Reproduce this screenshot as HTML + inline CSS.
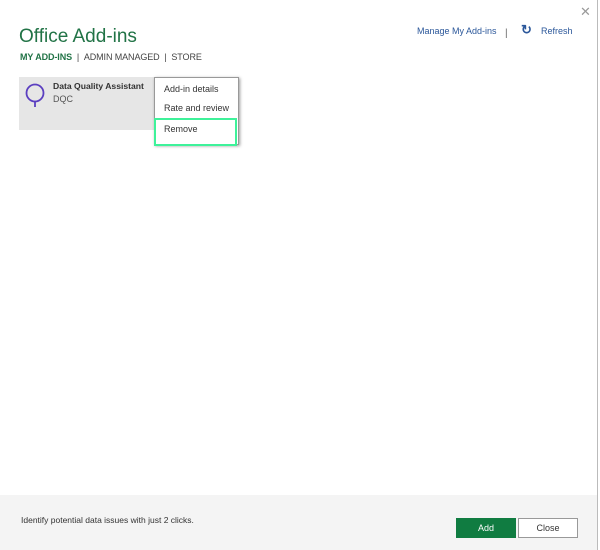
<!DOCTYPE html>
<html><head><style>
body{margin:0;width:600px;height:550px;background:#fff;font-family:"Liberation Sans",sans-serif;position:relative;overflow:hidden}
.a{position:absolute;white-space:nowrap}
</style></head><body>
<div class="a" style="left:597px;top:0;width:1px;height:550px;background:#bbb"></div>
<div class="a" style="left:580px;top:4px;font-size:13px;color:#999">✕</div>
<div class="a" style="left:19px;top:26px;font-size:19px;color:#217346">Office Add-ins</div>
<div class="a" style="left:20px;top:52px;font-size:9px;color:#444;letter-spacing:-0.1px"><b style="color:#217346">MY ADD-INS</b>&nbsp; | &nbsp;ADMIN MANAGED&nbsp; | &nbsp;STORE</div>
<div class="a" style="left:417px;top:26px;font-size:9px;color:#2b579a">Manage My Add-ins</div>
<div class="a" style="left:505px;top:28px;font-size:10px;color:#666">|</div>
<div class="a" style="left:521px;top:22px;font-size:13px;color:#2b579a;font-weight:bold">↻</div>
<div class="a" style="left:541px;top:26px;font-size:9px;color:#2b579a">Refresh</div>
<div class="a" style="left:19px;top:77px;width:140px;height:53px;background:#e6e6e6"></div>
<svg class="a" style="left:24px;top:82px" width="24" height="26"><circle cx="11" cy="11" r="8.5" fill="none" stroke="#5b3fc0" stroke-width="1.8"/><line x1="11" y1="19" x2="11" y2="25" stroke="#5b3fc0" stroke-width="1.8"/></svg>
<div class="a" style="left:53px;top:81px;font-size:8.6px;font-weight:bold;color:#333">Data Quality Assistant</div>
<div class="a" style="left:53px;top:94px;font-size:9px;color:#555">DQC</div>
<div class="a" style="left:154px;top:77px;width:83px;height:66px;background:#fff;border:1px solid #999;box-shadow:1px 1px 3px rgba(0,0,0,.4)"></div>
<div class="a" style="left:164px;top:84px;font-size:9px;color:#333">Add-in details</div>
<div class="a" style="left:164px;top:103px;font-size:9px;color:#333">Rate and review</div>
<div class="a" style="left:154px;top:118px;width:79px;height:24px;border:2px solid #3ef29a"></div>
<div class="a" style="left:164px;top:124px;font-size:9px;color:#333">Remove</div>
<div class="a" style="left:0;top:495px;width:597px;height:55px;background:#f4f4f4"></div>
<div class="a" style="left:21px;top:515px;font-size:8.5px;color:#333">Identify potential data issues with just 2 clicks.</div>
<div class="a" style="left:456px;top:518px;width:60px;height:20px;background:#107c41;color:#fff;font-size:9px;text-align:center;line-height:20px">Add</div>
<div class="a" style="left:518px;top:518px;width:58px;height:18px;background:#fff;border:1px solid #999;color:#333;font-size:9px;text-align:center;line-height:18px">Close</div>
</body></html>
